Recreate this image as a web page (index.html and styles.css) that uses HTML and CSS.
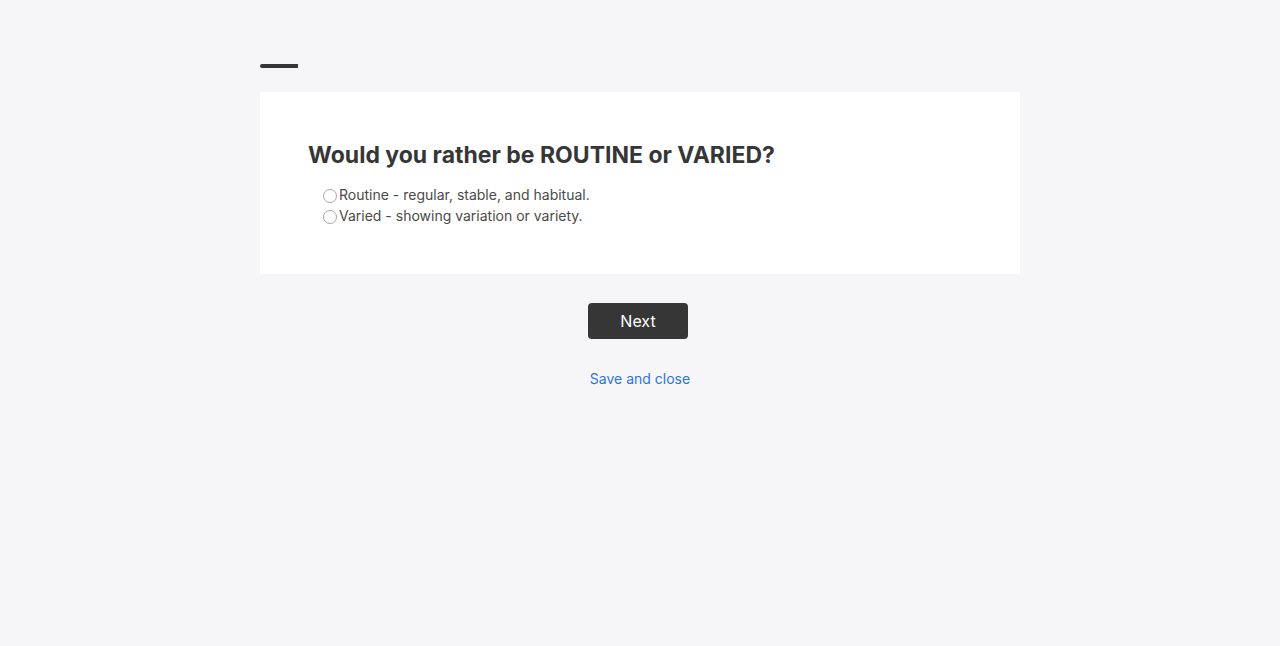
FILE: index.html
```html
<!DOCTYPE html>
<html lang="en">
<head>
<meta charset="utf-8">
<meta name="viewport" content="width=device-width, initial-scale=1">
<title>Would you rather be ROUTINE or VARIED?</title>
<link rel="stylesheet" href="styles.css">
</head>
<body>
<main class="survey">
  <div class="progress" role="progressbar" aria-label="Progress" aria-valuemin="0" aria-valuemax="100" aria-valuenow="5"><div class="progress-fill"></div></div>
  <form class="survey-form">
    <fieldset class="card">
      <legend class="question">Would you rather be ROUTINE or VARIED?</legend>
      <div class="options">
        <label class="option"><input class="radio" type="radio" name="answer" value="routine">Routine - regular, stable, and habitual.</label>
        <label class="option"><input class="radio" type="radio" name="answer" value="varied">Varied - showing variation or variety.</label>
      </div>
    </fieldset>
    <button class="next" type="submit">Next</button>
    <a class="save" href="#">Save and close</a>
  </form>
</main>
</body>
</html>
```
FILE: styles.css
```css
* {
  box-sizing: border-box;
}

body {
  margin: 0;
  background: #f6f6f9;
  color: #4a4a4a;
  font-family: Inter, "Open Sans", sans-serif;
  font-size: 14px;
  line-height: 21px;
}

.survey {
  max-width: 760px;
  margin: 0 auto;
  padding: 64px 0 32px;
}

.progress {
  height: 4px;
  margin-bottom: 24px;
  border-radius: 2px;
  overflow: hidden;
}

.progress-fill {
  width: 5%;
  height: 100%;
  background: #363636;
}

.survey-form {
  display: flex;
  flex-direction: column;
  align-items: center;
}

.card {
  width: 100%;
  min-width: 0;
  margin: 0 0 29px;
  padding: 48px;
  border: 0;
  background: #fff;
}

.question {
  float: left;
  width: 100%;
  margin-bottom: 14px;
  padding: 0;
  color: #363636;
  font-size: 23px;
  font-weight: 700;
  line-height: 30px;
}

.options {
  clear: both;
  display: flex;
  flex-direction: column;
  align-items: flex-start;
  padding-left: 15px;
}

.option {
  display: flex;
  align-items: center;
  gap: 2px;
}

.radio {
  appearance: none;
  width: 14px;
  height: 14px;
  margin: 2px 0 0;
  border: 1px solid #a8a8a8;
  border-radius: 50%;
  background: #fff;
}

.radio:checked {
  border: 4px solid #3273dc;
}

.next {
  width: 100px;
  height: 36px;
  margin-right: 4px;
  padding: 0;
  border: 0;
  border-radius: 4px;
  background: #363636;
  color: #fff;
  font-family: inherit;
  font-size: 16px;
}

.save {
  margin-top: 29px;
  color: #3273dc;
  text-decoration: none;
}
```
